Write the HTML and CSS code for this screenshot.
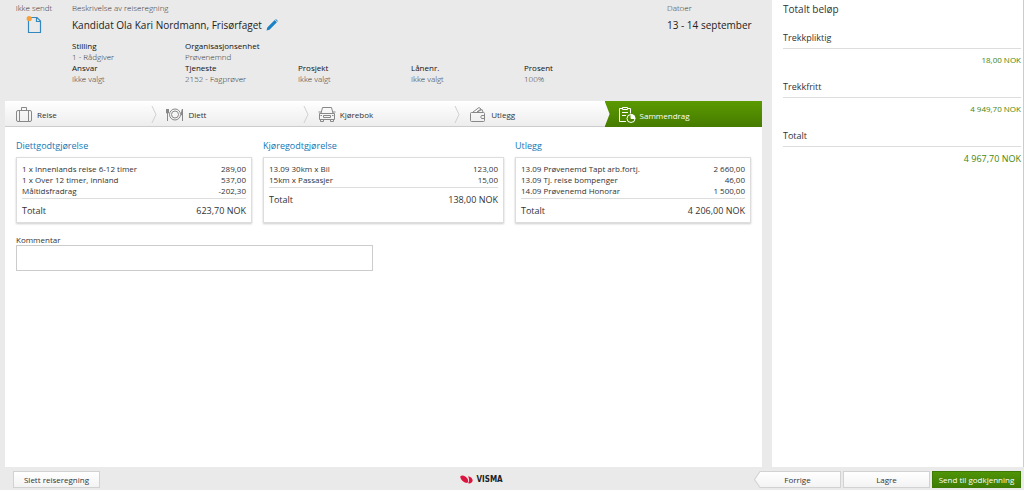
FILE: index.html
```html
<!DOCTYPE html>
<html lang="no">
<head>
<meta charset="utf-8">
<title>Reiseregning</title>
<link rel="stylesheet" href="styles.css">
</head>
<body>
<div class="workspace">
  <main class="report">
    <header class="report-header">
      <div class="status">
        <span class="caption">Ikke sendt</span>
        <svg class="status-icon" width="16" height="20" viewBox="0 0 16 20" fill="none"><path d="M5 2.500h6L14.500 6v11.500h-12V6M10.500 2.500v4h4" stroke="#3588bd" stroke-width="1.200"/><circle cx="3.200" cy="3.500" r="2.600" fill="#f5a03a"/></svg>
      </div>
      <div class="intro">
        <div class="headline">
          <div class="description">
            <span class="caption">Beskrivelse av reiseregning</span>
            <h1 class="title">Kandidat Ola Kari Nordmann, Frisørfaget
              <button class="edit" aria-label="Rediger"><svg width="12" height="12" viewBox="0 0 12 12"><path d="M.5 11.500 1.300 8.500 8.700 1.100l2.200 2.200-7.400 7.400zM9.300.6l.6-.5 2 2-.5.600z" fill="#1c80c4"/></svg></button>
            </h1>
          </div>
          <div class="dates">
            <span class="caption">Datoer</span>
            <p class="title">13 - 14 september</p>
          </div>
        </div>
        <dl class="meta">
          <div><dt>Stilling</dt><dd>1 - Rådgiver</dd></div>
          <div class="meta-wide"><dt>Organisasjonsenhet</dt><dd>Prøvenemnd</dd></div>
          <div><dt>Ansvar</dt><dd>Ikke valgt</dd></div>
          <div><dt>Tjeneste</dt><dd>2152 - Fagprøver</dd></div>
          <div><dt>Prosjekt</dt><dd>Ikke valgt</dd></div>
          <div><dt>Lånenr.</dt><dd>Ikke valgt</dd></div>
          <div><dt>Prosent</dt><dd>100%</dd></div>
        </dl>
      </div>
    </header>

    <div class="sheet">
      <nav class="steps">
        <a class="step" href="#reise"><svg class="step-icon" width="18" height="18" viewBox="0 0 18 18"><rect x="1.500" y="4.500" width="15" height="11" rx="1.500"/><path d="M4.500 4.500v11M13.500 4.500v11M6.500 4.500v-3h5v3"/></svg>Reise</a>
        <a class="step" href="#diett"><svg class="chevron" width="7" height="17" viewBox="0 0 7 17"><path d="M1 0l4 8.500L1 17"/></svg><svg class="step-icon" width="18" height="18" viewBox="0 0 18 18"><circle cx="9" cy="8.500" r="5.500"/><circle cx="9" cy="8.500" r="3.500"/><path d="M1.500 3v12M.5 3v4h2V3M16.500 3v12M16.500 3q-1.500 2-1 6h1"/></svg>Diett</a>
        <a class="step" href="#kjorebok"><svg class="chevron" width="7" height="17" viewBox="0 0 7 17"><path d="M1 0l4 8.500L1 17"/></svg><svg class="step-icon" width="18" height="18" viewBox="0 0 18 18"><path d="M3 7.500l1.500-6h9l1.500 6M1.500 7.500h15v6h-15zM2.500 13.500v2h3v-2M12.500 13.500v2h3v-2M5.500 9.500h7v2h-7zM2.500 9.500h1.500M14 9.500h1.500M.5 6h2.500M15 6h2.500"/></svg>Kjørebok</a>
        <a class="step" href="#utlegg"><svg class="chevron" width="7" height="17" viewBox="0 0 7 17"><path d="M1 0l4 8.500L1 17"/></svg><svg class="step-icon" width="18" height="18" viewBox="0 0 18 18"><path d="M2.500 6.500h12q1 0 1 1v7q0 1-1 1h-12q-1 0-1-1v-7q0-1 1-1zM4 6l6-4.500L12 3 8 6M8 6l5-2.500L14 6M15.500 9.500h-3q-1.500 1.500 0 3h3"/></svg>Utlegg</a>
        <a class="step step-current" href="#sammendrag" aria-current="step"><svg class="step-icon" width="18" height="18" viewBox="0 0 18 18"><path d="M8 15.500H1.500v-13h3M9.500 2.500h3v5M4.500 1.500h5v2h-5zM4 6.500h6M4 9.500h4"/><circle cx="13" cy="12.500" r="4"/><path d="M13 12.500v-4a4 4 0 0 1 4 4z" fill="#fff"/></svg>Sammendrag</a>
      </nav>

      <div class="summaries">
        <section class="summary">
          <h2>Diettgodtgjørelse</h2>
          <div class="card">
            <table>
              <tbody>
                <tr><td>1 x Innenlands reise 6-12 timer</td><td>289,00</td></tr>
                <tr><td>1 x Over 12 timer, innland</td><td>537,00</td></tr>
                <tr><td>Måltidsfradrag</td><td>-202,30</td></tr>
              </tbody>
              <tfoot><tr><td>Totalt</td><td>623,70 NOK</td></tr></tfoot>
            </table>
          </div>
        </section>
        <section class="summary">
          <h2>Kjøregodtgjørelse</h2>
          <div class="card">
            <table>
              <tbody>
                <tr><td>13.09 30km x Bil</td><td>123,00</td></tr>
                <tr><td>15km x Passasjer</td><td>15,00</td></tr>
              </tbody>
              <tfoot><tr><td>Totalt</td><td>138,00 NOK</td></tr></tfoot>
            </table>
          </div>
        </section>
        <section class="summary">
          <h2>Utlegg</h2>
          <div class="card">
            <table>
              <tbody>
                <tr><td>13.09 Prøvenemd Tapt arb.fortj.</td><td>2 660,00</td></tr>
                <tr><td>13.09 Tj. reise bompenger</td><td>46,00</td></tr>
                <tr><td>14.09 Prøvenemd Honorar</td><td>1 500,00</td></tr>
              </tbody>
              <tfoot><tr><td>Totalt</td><td>4 206,00 NOK</td></tr></tfoot>
            </table>
          </div>
        </section>
      </div>

      <div class="comment">
        <label for="comment">Kommentar</label>
        <textarea id="comment"></textarea>
      </div>
    </div>
  </main>

  <aside class="totals">
    <h2>Totalt beløp</h2>
    <dl>
      <dt>Trekkpliktig</dt><dd>18,00 NOK</dd>
      <dt>Trekkfritt</dt><dd>4 949,70 NOK</dd>
      <dt>Totalt</dt><dd class="grand">4 967,70 NOK</dd>
    </dl>
  </aside>
</div>

<footer class="actions">
  <div class="actions-start"><button class="button">Slett reiseregning</button></div>
  <div class="brand"><svg width="13" height="9" viewBox="0 0 13 9"><path d="M.2 1.500C2-.2 5 .6 7 3c1.500 2 1.500 4 .3 5C4 8 .5 5 .2 1.500zM8 1.200c3 .2 5 2.500 4.600 4.800C12 8 10 8.800 8 8.300 9.500 6.500 9.400 3.500 8 1.200z" fill="#dc1440"/></svg><span>VISMA</span></div>
  <div class="actions-end">
    <button class="button button-back"><svg class="back-shape" viewBox="0 0 86 17" preserveAspectRatio="none"><defs><linearGradient id="back-fill" x2="0" y2="1"><stop stop-color="#fff"/><stop offset="1" stop-color="#f3f3f3"/></linearGradient></defs><path d="M6 .5h79.500v16H6L.5 8.500z" fill="url(#back-fill)" stroke="#d2d2d2"/></svg><span>Forrige</span></button>
    <button class="button">Lagre</button>
    <button class="button button-primary">Send til godkjenning</button>
  </div>
</footer>
</body>
</html>
```
FILE: styles.css
```css
* {
  box-sizing: border-box;
}

body {
  margin: 0;
  min-height: 100vh;
  display: flex;
  flex-direction: column;
  background: #eaeaea;
  color: #333;
  font: 8px/11px "Open Sans", "Noto Sans", sans-serif;
}

h1, h2, p, dl, dd {
  margin: 0;
  font-weight: 400;
}

button, textarea {
  font: inherit;
  color: inherit;
}

.workspace {
  flex: 1;
  display: grid;
  grid-template-columns: minmax(0, 1fr) 252px;
}

.report {
  display: flex;
  flex-direction: column;
  padding: 0 10px 0 5px;
}

.report-header {
  display: flex;
  padding: 2px 0 17px;
}

.status {
  width: 67px;
  padding-right: 9px;
  display: flex;
  flex-direction: column;
  align-items: center;
  gap: 2px;
}

.caption {
  display: block;
  color: #333;
  font-weight: 300;
}

.intro {
  flex: 1;
}

.headline {
  display: flex;
  justify-content: space-between;
}

.dates {
  width: 95px;
}

.title {
  display: flex;
  align-items: center;
  gap: 4px;
  margin-top: 4px;
  font-size: 10px;
  line-height: 16px;
  white-space: nowrap;
  color: #222;
}

.edit {
  display: flex;
  padding: 0;
  border: 0;
  background: none;
}

.meta {
  display: grid;
  grid-template-columns: repeat(5, 113px);
  margin-top: 7px;
}

.meta-wide {
  grid-column: span 4;
}

.meta dt {
  color: #111;
  font-weight: 500;
}

.meta dd {
  color: #333;
  font-weight: 300;
}

.sheet {
  flex: 1;
  background: #fff;
}

.steps {
  display: grid;
  grid-template-columns: repeat(5, 1fr);
  height: 26px;
  background: linear-gradient(#fff, #ededed);
  border-bottom: 1px solid #ccc;
}

.step {
  position: relative;
  display: flex;
  align-items: center;
  gap: 4px;
  padding: 2px 10px 0;
  color: #333;
  text-decoration: none;
}

.step-icon {
  fill: none;
  stroke: #888;
}

.chevron {
  position: absolute;
  left: -5px;
  top: 5px;
  fill: none;
  stroke: #d0d0d0;
}

.step-current {
  margin: 0 0 -1px -6px;
  padding-left: 13px;
  background: linear-gradient(#5b9a00, #467b00);
  clip-path: polygon(0 0, 100% 0, 100% 100%, 0 100%, 5px 50%);
  color: #fff;
}

.step-current .step-icon {
  stroke: #fff;
}

.summaries {
  display: grid;
  grid-template-columns: 236fr 241fr 236fr;
  gap: 11px;
  padding: 12px 11px 0;
}

.summary {
  display: flex;
  flex-direction: column;
}

.summary h2 {
  margin-bottom: 4px;
  color: #1477b5;
  font-size: 9px;
  line-height: 14px;
}

.card {
  flex: 1;
  padding: 5px;
  border: 1px solid #ddd;
  box-shadow: 0 1px 2px #ccc;
}

table {
  width: 100%;
  border-collapse: collapse;
}

td {
  padding: 0;
}

td:last-child {
  text-align: right;
}

tbody tr:last-child td {
  padding-bottom: 2px;
  border-bottom: 1px solid #ddd;
}

tfoot td {
  padding: 6px 0 0;
  font-size: 9px;
  line-height: 12px;
}

.comment {
  display: flex;
  flex-direction: column;
  width: 50%;
  padding: 11px 11px 0;
}

.comment textarea {
  height: 26px;
  border: 1px solid #ccc;
  background: #fff;
  resize: none;
}

.totals {
  padding: 2px 2px 0 11px;
  background: #fff;
  border-right: 1px solid #ccc;
}

.totals h2 {
  font-size: 10px;
  line-height: 14px;
}

.totals dt {
  margin-top: 14px;
  padding-bottom: 3px;
  border-bottom: 1px solid #ddd;
  font-size: 9px;
  line-height: 15px;
}

.totals dd {
  padding-top: 5px;
  text-align: right;
  color: #47850a;
}

.totals .grand {
  font-size: 9px;
  line-height: 14px;
}

.actions {
  display: grid;
  grid-template-columns: 448fr auto 519fr;
  align-items: center;
  padding: 4px 3px 2px 13px;
}

.actions-end {
  display: flex;
  justify-content: flex-end;
  gap: 2px;
}

.brand {
  display: flex;
  align-items: center;
  gap: 3px;
  color: #222;
  font-family: "DejaVu Sans Condensed", "DejaVu Sans", sans-serif;
  font-weight: 700;
}

.button {
  position: relative;
  width: 87px;
  height: 17px;
  padding: 0;
  border: 1px solid #d2d2d2;
  background: linear-gradient(#fff, #f3f3f3);
  white-space: nowrap;
}

.button-back {
  border: 0;
  background: none;
}

.back-shape {
  position: absolute;
  inset: 0;
  width: 100%;
  height: 100%;
}

.button-back span {
  position: relative;
}

.button-primary {
  width: 89px;
  border-color: #3e7805;
  background: linear-gradient(#4f9406, #3e7c04);
  color: #fff;
}
```
